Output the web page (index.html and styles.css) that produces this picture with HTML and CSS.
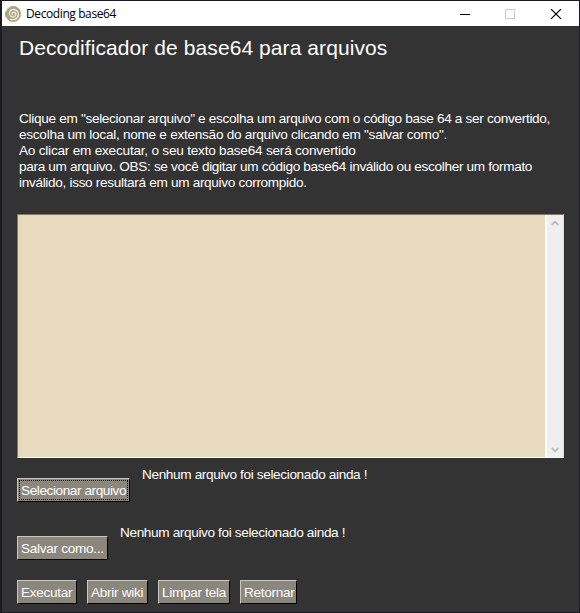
FILE: index.html
```html
<!DOCTYPE html>
<html lang="pt-BR">
<head>
<meta charset="utf-8">
<title>Decoding base64</title>
<link rel="stylesheet" href="styles.css">
</head>
<body>
<div class="window">
  <header class="titlebar">
    <svg class="logo" width="16" height="16" viewBox="0 0 16 16"><circle cx="8" cy="8" r="8" fill="#a9a47d"/><path d="M8.3 8.8C6.7 8.8 6.5 6.7 8.2 6.3C10.6 5.8 11.7 8.3 10.4 10C8.7 12.2 4.8 11.2 4.4 8C4 4.7 7.2 2.8 10 3.6C13.1 4.5 14.2 7.8 12.9 10.7C11.6 13.5 8 14.4 5 13.2" fill="none" stroke="#f8f7f0" stroke-width="1.2"/><path d="M.8 5.5Q2 2 5.5.8M1 11Q2 13.5 4 14.8" fill="none" stroke="#ebe8da"/></svg>
    <span class="caption">Decoding base64</span>
    <svg class="controls" width="103" height="10" viewBox="0 0 103 10" shape-rendering="crispEdges"><path d="M0 5.5H10" stroke="#000"/><path d="M45.5.5H54.5V9.5H45.5Z" fill="none" stroke="#ccc"/><path d="M91 0L101 10M101 0L91 10" stroke="#000" stroke-width="1.1" shape-rendering="auto"/></svg>
  </header>
  <main class="content">
    <h1 class="heading">Decodificador de base64 para arquivos</h1>
    <p class="intro">
      <span class="line l1">Clique em "selecionar arquivo" e escolha um arquivo com o código base 64 a ser convertido,</span>
      <span class="line l2">escolha um local, nome e extensão do arquivo clicando em "salvar como".</span>
      <span class="line l3">Ao clicar em executar, o seu texto base64 será convertido</span>
      <span class="line l4">para um arquivo. OBS: se você digitar um código base64 inválido ou escolher um formato</span>
      <span class="line l5">inválido, isso resultará em um arquivo corrompido.</span>
    </p>
    <div class="output">
      <div class="paper"></div>
      <div class="scrollbar">
        <svg width="8" height="6" viewBox="0 0 8 6"><path d="M.7 5L4 1.6L7.3 5" fill="none" stroke="#bfbfbf" stroke-width="2"/></svg>
        <svg width="8" height="6" viewBox="0 0 8 6"><path d="M.7 1L4 4.4L7.3 1" fill="none" stroke="#bfbfbf" stroke-width="2"/></svg>
      </div>
    </div>
    <div class="row pick"><button class="btn select">Selecionar arquivo</button><span class="status">Nenhum arquivo foi selecionado ainda !</span></div>
    <div class="row save"><button class="btn saveas">Salvar como...</button><span class="status">Nenhum arquivo foi selecionado ainda !</span></div>
    <div class="actions">
      <button class="btn run">Executar</button>
      <button class="btn wiki">Abrir wiki</button>
      <button class="btn clear">Limpar tela</button>
      <button class="btn back">Retornar</button>
    </div>
  </main>
</div>
</body>
</html>
```
FILE: styles.css
```css
* { box-sizing: border-box; }
body { margin: 0; height: 613px; padding: 1px 1px 1px 2px; background: #1c1b20; font: 13.6px/16px "Liberation Sans", Arial, sans-serif; color: #fff; overflow: hidden; }
.window { height: 611px; background: #333; }
.titlebar { height: 25px; background: #fff; color: #000; display: flex; align-items: center; padding: 0 16px 0 3px; }
.logo { margin-right: 5px; }
.caption { font: 12px/16px "Open Sans", "Noto Sans", sans-serif; letter-spacing: -0.4px; }
.controls { margin-left: auto; }
.content { padding: 9px 15px 0; }
.heading { margin: 0 0 0 2px; font-size: 21px; font-weight: 400; line-height: 26px; letter-spacing: 0.08px; white-space: nowrap; }
.intro { margin: 50px 0 0 2px; height: 80px; }
.line { display: block; white-space: nowrap; }
.l1 { letter-spacing: -0.31px; }
.l2 { letter-spacing: -0.27px; }
.l3 { letter-spacing: -0.22px; }
.l4 { letter-spacing: -0.325px; }
.l5 { letter-spacing: -0.32px; }
.output { margin-top: 23px; width: 547px; height: 244px; display: flex; background: #e8dabd; border: 1px solid; border-color: #82796a #e8dabd #fff #82796a; }
.paper { flex: 1; border-right: 2px solid #fff; }
.scrollbar { width: 16px; background: #efefef; display: flex; flex-direction: column; justify-content: space-between; align-items: center; padding: 5px 0 4px; }
.row { display: flex; }
.pick { margin-top: 8px; gap: 12px; }
.save { margin-top: 22px; gap: 12px; }
.row .btn { margin-top: 12px; }
.status { padding-top: 1px; white-space: nowrap; letter-spacing: -0.36px; }
.btn { height: 24px; padding: 1px 0 0 3px; font: inherit; text-align: left; color: #fff; background: #8c877c; border: 1px solid; border-color: #c9c6c0 #000 #000 #c9c6c0; border-radius: 0; white-space: nowrap; line-height: 21px; letter-spacing: -0.3px; }
.select { width: 113px; letter-spacing: -0.42px; outline: 1px dotted #000; outline-offset: -3px; }
.saveas { width: 91px; }
.actions { display: flex; gap: 10px; margin-top: 20px; }
.run { width: 60px; }
.wiki { width: 61px; }
.clear { width: 72px; }
.back { width: 57px; }
```
